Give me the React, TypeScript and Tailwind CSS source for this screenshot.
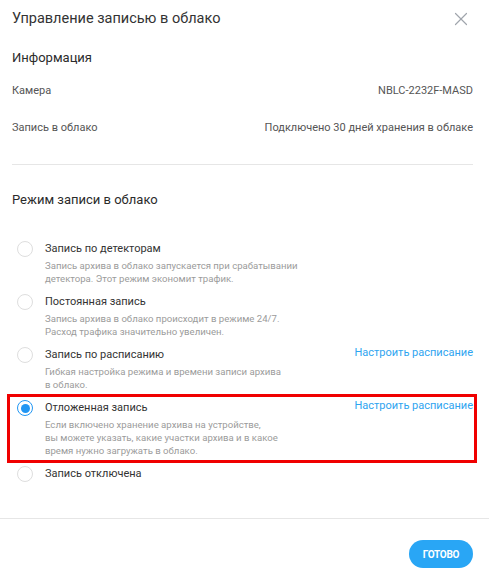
import { X } from "lucide-react";

type Mode = {
  title: string;
  lines: string[];
  link?: boolean;
  checked?: boolean;
  marked?: boolean;
};

const modes: Mode[] = [
  {
    title: "Запись по детекторам",
    lines: ["Запись архива в облако запускается при срабатывании", "детектора. Этот режим экономит трафик."],
  },
  {
    title: "Постоянная запись",
    lines: ["Запись архива в облако происходит в режиме 24/7.", "Расход трафика значительно увеличен."],
  },
  {
    title: "Запись по расписанию",
    lines: ["Гибкая настройка режима и времени записи архива", "в облако."],
    link: true,
  },
  {
    title: "Отложенная запись",
    lines: [
      "Если включено хранение архива на устройстве,",
      "вы можете указать, какие участки архива и в какое",
      "время нужно загружать в облако.",
    ],
    link: true,
    checked: true,
    marked: true,
  },
  { title: "Запись отключена", lines: [] },
];

const Radio = ({ checked }: { checked?: boolean }) =>
  checked ? (
    <span className="w-[16px] h-[16px] rounded-full border border-[#2196f3] flex items-center justify-center flex-shrink-0">
      <span className="w-[9px] h-[9px] rounded-full bg-[#2196f3]" />
    </span>
  ) : (
    <span className="w-[16px] h-[16px] rounded-full border border-[#dedede] flex-shrink-0" />
  );

const App = () => (
  <div className="w-[489px] h-[574px] bg-white font-['Roboto','Liberation_Sans',sans-serif] text-[#333]">
    <div className="flex items-center justify-between pl-3 pr-[17px] pt-[8px]">
      <h2 className="text-[14.5px] leading-5">Управление записью в облако</h2>
      <X className="w-[22px] h-[22px] text-[#a0a5ac]" strokeWidth={1.3} />
    </div>

    <div className="pl-3 pr-4">
      <h3 className="mt-[18px] text-[13px] leading-5 text-[#2b2b2b]">Информация</h3>
      <div className="mt-[15px] flex justify-between text-[11px] leading-4 text-[#555]">
        <span>Камера</span>
        <span>NBLC-2232F-MASD</span>
      </div>
      <div className="mt-[21px] flex justify-between text-[11px] leading-4 text-[#555]">
        <span>Запись в облако</span>
        <span>Подключено 30 дней хранения в облаке</span>
      </div>
      <div className="mt-[28px] border-t border-[#e6e6e6]" />

      <h3 className="mt-[25px] text-[13px] leading-5 text-[#2b2b2b]">Режим записи в облако</h3>

      <div className="mt-[31px] flex flex-col gap-[9px]">
        {modes.map((m) => (
          <div key={m.title} className="relative flex gap-[12px] pl-[5px]">
            {m.marked && (
              <span className="absolute -left-[5px] -right-[4px] -top-[6px] -bottom-[6px] border-[3px] border-[#f00000] pointer-events-none" />
            )}
            <Radio checked={m.checked} />
            <div className="flex-1">
              <div className="flex justify-between items-start">
                <span className="text-[11px] leading-4">{m.title}</span>
                {m.link && <a className="text-[11px] leading-4 text-[#2ea4f0] -mt-[2px]">Настроить расписание</a>}
              </div>
              {m.lines.length > 0 && (
                <div className="mt-[2px] text-[9.6px] leading-[13px] text-[#9b9b9b]">
                  {m.lines.map((l) => (
                    <div key={l}>{l}</div>
                  ))}
                </div>
              )}
            </div>
          </div>
        ))}
      </div>
    </div>

    <div className="mt-[36px] border-t border-[#e6e6e6]" />
    <div className="flex justify-end pr-4 pt-[21px]">
      <button className="w-[64px] h-[28px] rounded-full bg-[#29a6f5] text-white text-[10px] font-bold tracking-tight">
        ГОТОВО
      </button>
    </div>
  </div>
);

export default App;
